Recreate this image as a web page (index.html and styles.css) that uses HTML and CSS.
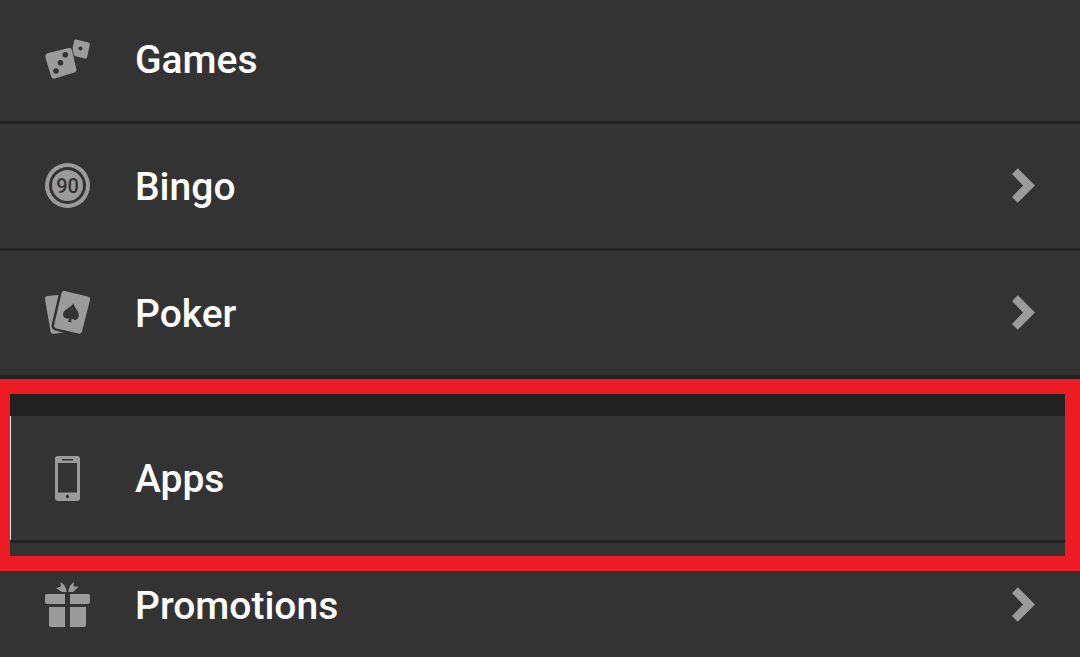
FILE: index.html
```html
<!DOCTYPE html>
<html lang="en">
<head>
    <meta charset="UTF-8">
    <meta name="viewport" content="width=device-width, initial-scale=1.0">
    <title>Menu</title>
    <link rel="stylesheet" href="styles.css">
</head>
<body>

<nav class="menu">
    <ul class="menu-list">
        <li>
            <a class="menu-item" href="#games">
                <svg class="icon" viewBox="0 -4 45 45" aria-hidden="true">
                    <path d="M3.200 13 L23.500 8 Q26.300 7.400 27 10 L31.300 29 Q31.900 31.800 29.300 32.600 L9.800 38.500 Q6.900 39.300 6.200 36.600 L.4 17.500 Q-.2 14 3.200 13Z"/>
                    <path d="M31.200 -.4 L43.500 2.600 Q45.200 3.100 44.800 4.800 L42.200 17 Q41.700 19 39.800 18.600 L30.500 16.200 Q28.800 15.800 28.600 14 L27.600 8 L29 1 Q29.500 -.8 31.200 -.4Z"/>
                    <g class="hole">
                        <circle cx="20.300" cy="14.700" r="2.800"/>
                        <circle cx="15.500" cy="22.700" r="2.800"/>
                        <circle cx="11" cy="31" r="2.800"/>
                        <circle cx="35.500" cy="8.500" r="2"/>
                    </g>
                </svg>
                <span class="label">Games</span>
            </a>
        </li>
        <li>
            <a class="menu-item" href="#bingo">
                <svg class="icon" viewBox="0 0 45 45" aria-hidden="true">
                    <circle cx="22.500" cy="22.500" r="22.500"/>
                    <circle class="hole" cx="22.500" cy="22.500" r="18.500"/>
                    <circle cx="22.500" cy="22.500" r="15.500"/>
                    <text class="ball-number" x="22.500" y="29.500" text-anchor="middle">90</text>
                </svg>
                <span class="label">Bingo</span>
                <svg class="chevron" viewBox="0 0 24 36" aria-hidden="true"><path d="M6 0 L24 18 L6 36 L0 30 L11.500 18 L0 6Z"/></svg>
            </a>
        </li>
        <li>
            <a class="menu-item" href="#poker">
                <svg class="icon" viewBox="0 -1 45 45" aria-hidden="true">
                    <path d="M2.500 5 L18 3.500 L20 40 L18 41.500 L9 42.800 Q6 43.200 5.500 40 L0 8.500 Q-.3 5.300 2.500 5Z"/>
                    <path class="front-card" d="M19.500 0 L42.800 5.500 Q45.600 6.300 45 9 L37 40.500 Q36.200 43.200 33.500 42.600 L11.500 37.400 Q8.500 36.600 9.200 33.700 L16.500 2.300 Q17.200 -.5 19.500 0Z"/>
                    <path class="hole" d="M28.500 12.200 C29.500 17.500 35 20.500 33.700 25.800 C32.700 29.400 28.800 29.700 26.800 27.500 L26.200 31.500 L22.800 30.700 L24.500 27 C22.200 28.800 17.900 27 18 23.300 C18.300 18.300 25 17.300 28.500 12.200Z"/>
                </svg>
                <span class="label">Poker</span>
                <svg class="chevron" viewBox="0 0 24 36" aria-hidden="true"><path d="M6 0 L24 18 L6 36 L0 30 L11.500 18 L0 6Z"/></svg>
            </a>
        </li>
    </ul>

    <ul class="menu-list">
        <li class="highlighted">
            <a class="menu-item" href="#apps">
                <svg class="icon" viewBox="0 -1 45 45" aria-hidden="true">
                    <rect x="10" y="0" width="25" height="45" rx="3"/>
                    <g class="hole">
                        <rect x="13" y="7" width="19" height="29.500"/>
                        <rect x="17" y="3" width="11" height="1.500"/>
                        <circle cx="22.500" cy="40.500" r="1.700"/>
                    </g>
                </svg>
                <span class="label">Apps</span>
            </a>
        </li>
        <li>
            <a class="menu-item" href="#promotions">
                <svg class="icon" viewBox="0 0 45 45" aria-hidden="true">
                    <path d="M2 12 H20 V22 H2 Q0 22 0 20 V14 Q0 12 2 12Z"/>
                    <path d="M25 12 H43 Q45 12 45 14 V20 Q45 22 43 22 H25Z"/>
                    <path d="M4 25 H20 V45 H6 Q4 45 4 43Z"/>
                    <path d="M25 25 H41 V43 Q41 45 39 45 H25Z"/>
                    <path d="M21.500 10 H17 L11 6 L16 4.500 L15.500 0 Q21.500 3.500 21.500 10Z"/>
                    <path d="M23.500 10 H28 L34 4.500 L28.500 4.500 L29 0 Q23.500 3.500 23.500 10Z"/>
                </svg>
                <span class="label">Promotions</span>
                <svg class="chevron" viewBox="0 0 24 36" aria-hidden="true"><path d="M6 0 L24 18 L6 36 L0 30 L11.500 18 L0 6Z"/></svg>
            </a>
        </li>
    </ul>
</nav>

</body>
</html>
```

FILE: styles.css
```css
:root { --row: #333333; --line: #222222; --icon: #9b9b9b; --mark: #ed1c24; }
* { box-sizing: border-box; }
body { margin: 0; background: var(--line); font-family: Roboto, Arial, sans-serif; overflow: hidden; }

.menu { display: flex; flex-direction: column; gap: 38px; margin-top: -3px; }
.menu-list { list-style: none; margin: 0; padding: 0; }

.menu-item { display: flex; align-items: center; gap: 45px; min-height: 127px; padding: 0 45px 2px; background: var(--row); border-bottom: 3px solid var(--line); color: #ffffff; text-decoration: none; }
.label { flex: 1; font-size: 39px; line-height: 48px; font-weight: 500; padding-top: 3px; }

.icon { width: 45px; height: 45px; fill: var(--icon); flex: none; overflow: visible; }
.icon .hole { fill: var(--row); }
.icon .front-card { stroke: var(--row); stroke-width: 5px; paint-order: stroke; }
.icon .ball-number { fill: var(--row); font-size: 20px; font-weight: 500; }
.chevron { width: 23px; height: 35px; fill: var(--icon); flex: none; }

/* red frame drawn over the row and its neighbours */
.highlighted { position: relative; }
.highlighted::after { content: ""; position: absolute; top: -37px; bottom: -28px; left: 0; right: 0; border: 15px solid var(--mark); border-left-width: 10px; pointer-events: none; }
.highlighted::before { content: ""; position: absolute; top: 0; bottom: 3px; left: 10px; width: 1px; background: #ffffff; }
```
